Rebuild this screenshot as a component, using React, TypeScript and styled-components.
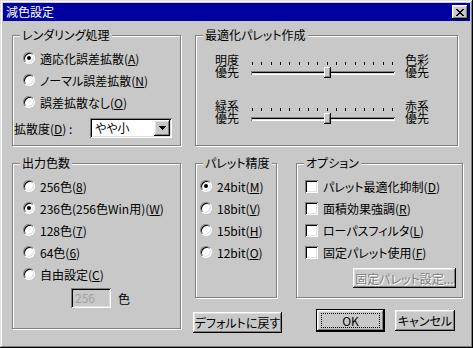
import React from "react";
import styled, { createGlobalStyle } from "styled-components";

const FACE = "#c8c8c8";

const GlobalStyle = createGlobalStyle`
  html, body {
    margin: 0;
    padding: 0;
    background: ${FACE};
  }
  body {
    font-family: "Noto Sans CJK JP", "Liberation Sans", sans-serif;
    font-size: 12px;
    color: #000;
    font-feature-settings: "palt";
  }
  * {
    box-sizing: border-box;
  }
`;

const raised = `
  box-shadow: inset -1px -1px #000, inset 1px 1px #fff, inset -2px -2px #808080, inset 2px 2px #dfdfdf;
`;

const sunken = `
  box-shadow: inset 1px 1px #808080, inset -1px -1px #fff, inset 2px 2px #000, inset -2px -2px #dfdfdf;
`;

const Window = styled.div`
  width: 473px;
  height: 348px;
  padding: 3px;
  background: ${FACE};
  box-shadow: inset -1px -1px #000, inset 1px 1px #dfdfdf, inset -2px -2px #808080, inset 2px 2px #fff;
  display: flex;
  flex-direction: column;
`;

const TitleBar = styled.div`
  height: 18px;
  background: #0000a0;
  color: #fff;
  display: flex;
  align-items: center;
  justify-content: space-between;
  padding: 0 2px 0 3px;
  line-height: 18px;
`;

const CloseButton = styled.div`
  width: 16px;
  height: 14px;
  background: ${FACE};
  ${raised}
  display: flex;
  align-items: center;
  justify-content: center;
  padding-right: 1px;
`;

const Body = styled.div`
  padding: 14px 0 0 9px;
  display: flex;
  flex-direction: column;
`;

const Row = styled.div<{ $top?: number }>`
  display: flex;
  gap: 14px;
  align-items: flex-start;
  margin-top: ${(p) => p.$top ?? 0}px;
`;

const Column = styled.div`
  display: flex;
  flex-direction: column;
`;

const Group = styled.div<{ $w: number; $h: number; $pt?: number; $pl?: number }>`
  position: relative;
  width: ${(p) => p.$w}px;
  height: ${(p) => p.$h}px;
  border: 1px solid #808080;
  box-shadow: inset 1px 1px #fff, 1px 1px #fff;
  padding: ${(p) => p.$pt ?? 11}px 0 0 ${(p) => p.$pl ?? 0}px;
  display: flex;
  flex-direction: column;
`;

const GroupLabel = styled.span`
  position: absolute;
  top: -8px;
  left: 7px;
  padding: 0 2px;
  line-height: 14px;
  background: ${FACE};
`;

const Option = styled.div<{ $h?: number }>`
  display: flex;
  align-items: center;
  gap: 5px;
  height: ${(p) => p.$h ?? 22}px;
  white-space: nowrap;
`;

const RadioCircle = styled.span<{ $checked?: boolean }>`
  flex: none;
  width: 12px;
  height: 12px;
  border-radius: 50%;
  border: 1px solid;
  border-color: #808080 #fff #fff #808080;
  background: #fff;
  box-shadow: inset 1px 1px #000, inset -1px -1px #dfdfdf;
  display: flex;
  align-items: center;
  justify-content: center;
  &::after {
    content: "";
    width: 4px;
    height: 4px;
    border-radius: 50%;
    background: ${(p) => (p.$checked ? "#000" : "transparent")};
  }
`;

const CheckBox = styled.span`
  flex: none;
  width: 13px;
  height: 13px;
  background: #fff;
  ${sunken}
`;

const U = styled.span`
  text-decoration: underline;
  text-underline-offset: 1px;
`;

const SelectRow = styled.div`
  display: flex;
  align-items: center;
  margin: 5px 0 0 -9px;
`;

const SelectLabel = styled.span`
  width: 76px;
`;

const Select = styled.div`
  width: 82px;
  height: 20px;
  padding: 2px;
  background: #fff;
  ${sunken}
  display: flex;
  align-items: center;
`;

const SelectText = styled.span`
  flex: 1;
  padding-left: 3px;
  line-height: 16px;
`;

const ArrowButton = styled.div`
  width: 16px;
  height: 16px;
  background: ${FACE};
  ${raised}
  display: flex;
  align-items: center;
  justify-content: center;
`;

const SliderRow = styled.div<{ $top?: number }>`
  display: flex;
  align-items: flex-start;
  height: 24px;
  padding-left: 19px;
  margin-top: ${(p) => p.$top ?? 0}px;
`;

const SideLabel = styled.div`
  width: 24px;
  line-height: 12px;
`;

const Slider = styled.div`
  position: relative;
  width: 144px;
  height: 24px;
  margin: 0 10px 0 12px;
  padding-top: 8px;
`;

const Ticks = styled.div`
  display: flex;
  justify-content: space-between;
  padding: 0 2px 0 1px;
  height: 3px;
`;

const Tick = styled.span`
  width: 1px;
  height: 3px;
  background: #000;
`;

const Track = styled.div`
  margin-top: 6px;
  height: 4px;
  background: #dfdfdf;
  box-shadow: inset 1px 1px #808080, inset -1px -1px #fff, inset 0 2px #000;
`;

const Thumb = styled.div`
  position: absolute;
  top: 13px;
  width: 7px;
  height: 11px;
  background: ${FACE};
  box-shadow: inset -1px -1px #000, inset 1px 1px #fff, inset -2px -2px #808080;
`;

const InputRow = styled.div`
  display: flex;
  align-items: center;
  gap: 7px;
  margin: 3px 0 0 48px;
`;

const NumberBox = styled.div`
  width: 40px;
  height: 20px;
  padding-left: 4px;
  line-height: 20px;
  color: #a0a0a0;
  background: ${FACE};
  ${sunken}
`;

const Button = styled.div<{ $w: number; $h?: number; $disabled?: boolean }>`
  position: relative;
  width: ${(p) => p.$w}px;
  height: ${(p) => p.$h ?? 21}px;
  background: ${FACE};
  ${raised}
  display: flex;
  align-items: center;
  justify-content: center;
  white-space: nowrap;
  color: ${(p) => (p.$disabled ? "#808080" : "#000")};
  text-shadow: ${(p) => (p.$disabled ? "1px 1px #fff" : "none")};
`;

const DefaultButton = styled(Button)`
  box-shadow: inset -1px -1px #000, inset 1px 1px #000, inset -2px -2px #000, inset 2px 2px #fff,
    inset -3px -3px #808080, inset 3px 3px #dfdfdf;
  &::after {
    content: "";
    position: absolute;
    inset: 4px 5px;
    border: 1px dotted #000;
  }
`;

const ResetButton = styled(Button)`
  margin: 14px 0 0 -2px;
`;

const FixedPaletteButton = styled(Button)`
  margin: 5px 0 0 48px;
`;

const ButtonBar = styled.div`
  display: flex;
  align-items: center;
  gap: 10px;
  margin: 11px 0 0 20px;
`;

const CloseGlyph = () => (
  <svg width="8" height="7" viewBox="0 0 8 7" shapeRendering="crispEdges">
    <path
      fill="#000"
      d="M0 0h2v1H0zM6 0h2v1H6zM1 1h2v1H1zM5 1h2v1H5zM2 2h4v1H2zM3 3h2v1H3zM2 4h4v1H2zM1 5h2v1H1zM5 5h2v1H5zM0 6h2v1H0zM6 6h2v1H6z"
    />
  </svg>
);

const DownArrow = () => (
  <svg width="7" height="4" viewBox="0 0 7 4" shapeRendering="crispEdges">
    <path fill="#000" d="M0 0h7v1H0zM1 1h5v1H1zM2 2h3v1H2zM3 3h1v1H3z" />
  </svg>
);

const Radio = ({ checked, children }: { checked?: boolean; children: React.ReactNode }) => (
  <Option>
    <RadioCircle $checked={checked} />
    <span>{children}</span>
  </Option>
);

const Check = ({ children }: { children: React.ReactNode }) => (
  <Option>
    <CheckBox />
    <span>{children}</span>
  </Option>
);

const TICKS = 16;

const TrackBar = ({ value }: { value: number }) => {
  const step = 141 / (TICKS - 1);
  const left = Math.round(1 + value * step - 3.5);
  return (
    <Slider>
      <Ticks>
        {Array.from({ length: TICKS }).map((_, i) => (
          <Tick key={i} />
        ))}
      </Ticks>
      <Track />
      <Thumb style={{ left }} />
    </Slider>
  );
};

const Side = ({ top }: { top: string }) => (
  <SideLabel>
    {top}
    <br />
    優先
  </SideLabel>
);

const App = () => {
  return (
    <>
      <GlobalStyle />
      <Window>
        <TitleBar>
          <span>減色設定</span>
          <CloseButton>
            <CloseGlyph />
          </CloseButton>
        </TitleBar>
        <Body>
          <Row>
            <Group $w={169} $h={111} $pl={10}>
              <GroupLabel>レンダリング処理</GroupLabel>
              <Radio checked>
                適応化誤差拡散(<U>A</U>)
              </Radio>
              <Radio>
                ノーマル誤差拡散(<U>N</U>)
              </Radio>
              <Radio>
                誤差拡散なし(<U>O</U>)
              </Radio>
              <SelectRow>
                <SelectLabel>
                  拡散度(<U>D</U>) :
                </SelectLabel>
                <Select>
                  <SelectText>やや小</SelectText>
                  <ArrowButton>
                    <DownArrow />
                  </ArrowButton>
                </Select>
              </SelectRow>
            </Group>
            <Group $w={263} $h={111} $pt={0}>
              <GroupLabel>最適化パレット作成</GroupLabel>
              <SliderRow $top={18}>
                <Side top="明度" />
                <TrackBar value={8} />
                <Side top="色彩" />
              </SliderRow>
              <SliderRow $top={22}>
                <Side top="緑系" />
                <TrackBar value={8} />
                <Side top="赤系" />
              </SliderRow>
            </Group>
          </Row>
          <Row $top={17}>
            <Group $w={169} $h={166} $pl={10}>
              <GroupLabel>出力色数</GroupLabel>
              <Radio>
                256色(<U>8</U>)
              </Radio>
              <Radio checked>
                236色(256色Win用)(<U>W</U>)
              </Radio>
              <Radio>
                128色(<U>7</U>)
              </Radio>
              <Radio>
                64色(<U>6</U>)
              </Radio>
              <Radio>
                自由設定(<U>C</U>)
              </Radio>
              <InputRow>
                <NumberBox>256</NumberBox>
                <span>色</span>
              </InputRow>
            </Group>
            <Column>
              <Group $w={82} $h={135} $pl={4}>
                <GroupLabel>パレット精度</GroupLabel>
                <Radio checked>
                  24bit(<U>M</U>)
                </Radio>
                <Radio>
                  18bit(<U>V</U>)
                </Radio>
                <Radio>
                  15bit(<U>H</U>)
                </Radio>
                <Radio>
                  12bit(<U>O</U>)
                </Radio>
              </Group>
              <ResetButton $w={89}>デフォルトに戻す</ResetButton>
            </Column>
            <Column>
              <Group $w={167} $h={135} $pl={8}>
                <GroupLabel>オプション</GroupLabel>
                <Check>
                  パレット最適化抑制(<U>D</U>)
                </Check>
                <Check>
                  面積効果強調(<U>R</U>)
                </Check>
                <Check>
                  ローパスフィルタ(<U>L</U>)
                </Check>
                <Check>
                  固定パレット使用(<U>F</U>)
                </Check>
                <FixedPaletteButton $w={103} $h={20} $disabled>
                  固定パレット設定...
                </FixedPaletteButton>
              </Group>
              <ButtonBar>
                <DefaultButton $w={69} $h={23}>
                  OK
                </DefaultButton>
                <Button $w={60}>キャンセル</Button>
              </ButtonBar>
            </Column>
          </Row>
        </Body>
      </Window>
    </>
  );
};

export default App;
